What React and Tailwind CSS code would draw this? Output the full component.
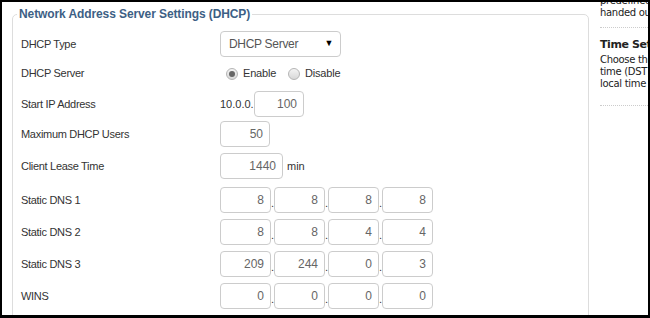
import React from "react";

const LABEL_FONT = { fontFamily: '"Liberation Sans", Arial, sans-serif' };

function Field({ value, w = "w-[51px]" }) {
  return (
    <div
      className={`${w} h-[26px] border border-[#ccc] rounded-[4px] bg-white flex items-center justify-end pr-[6px] text-[12px] text-[#666]`}
    >
      {value}
    </div>
  );
}

function Quad({ values }) {
  return (
    <div className="flex items-center">
      {values.map((v, i) => (
        <React.Fragment key={i}>
          <Field value={v} />
          {i < 3 && <span className="w-[3px] text-[11px] text-[#333] self-end pb-[4px] leading-none">.</span>}
        </React.Fragment>
      ))}
    </div>
  );
}

function Row({ label, h, children }) {
  return (
    <div className={`flex items-center ${h}`}>
      <div className="w-[203px] pl-[4px] text-[11px] tracking-[-0.3px] text-[#333]">{label}</div>
      <div className="flex items-center">{children}</div>
    </div>
  );
}

function Radio({ checked }) {
  return (
    <span className="w-[12px] h-[12px] rounded-full border border-[#b5b5b5] bg-gradient-to-b from-[#f4f4f4] to-[#d8d8d8] flex items-center justify-center">
      {checked && <span className="w-[6px] h-[6px] rounded-full bg-[#666]" />}
    </span>
  );
}

export default function App() {
  return (
    <div
      className="w-[650px] h-[318px] overflow-hidden bg-white border-black border-t-2 border-l-2 border-r-2 border-b-[3px] flex"
      style={LABEL_FONT}
    >
      {/* MAIN PANEL */}
      <div className="w-[596px] shrink-0 pl-[10px] pt-[4px]">
        <fieldset className="w-[577px] border border-[#ddd] rounded-[5px] px-[4px] pb-[20px]">
          <legend className="px-[2px] text-[12px] font-bold tracking-[-0.1px] text-[#3d5f85] leading-[16px]">
            Network Address Server Settings (DHCP)
          </legend>

          <div className="pt-[7px]">
            <Row label="DHCP Type" h="h-[30px]">
              <div className="w-[121px] h-[26px] border border-[#ccc] rounded-[4px] bg-white flex items-center justify-between pl-[8px] pr-[7px] text-[12px] tracking-[-0.3px] text-[#555]">
                <span>DHCP Server</span>
                <span className="text-[9px] text-black">▼</span>
              </div>
            </Row>
            <Row label="DHCP Server" h="h-[29px]">
              <div className="flex items-center pl-[6px] text-[11px] tracking-[-0.2px] text-[#333]">
                <Radio checked />
                <span className="ml-[5px]">Enable</span>
                <span className="ml-[12px]">
                  <Radio />
                </span>
                <span className="ml-[5px]">Disable</span>
              </div>
            </Row>
            <Row label="Start IP Address" h="h-[32px]">
              <span className="text-[11px] text-[#333] w-[34px]">10.0.0.</span>
              <Field value="100" w="w-[50px]" />
            </Row>
            <Row label="Maximum DHCP Users" h="h-[28px]">
              <Field value="50" w="w-[50px]" />
            </Row>
            <Row label="Client Lease Time" h="h-[36px]">
              <Field value="1440" w="w-[63px]" />
              <span className="ml-[4px] text-[11px] text-[#333]">min</span>
            </Row>
            <Row label="Static DNS 1" h="h-[32px]">
              <Quad values={["8", "8", "8", "8"]} />
            </Row>
            <Row label="Static DNS 2" h="h-[32px]">
              <Quad values={["8", "8", "4", "4"]} />
            </Row>
            <Row label="Static DNS 3" h="h-[32px]">
              <Quad values={["209", "244", "0", "3"]} />
            </Row>
            <Row label="WINS" h="h-[32px]">
              <Quad values={["0", "0", "0", "0"]} />
            </Row>
          </div>
        </fieldset>
      </div>

      {/* SIDEBAR */}
      <div
        className="flex-1 pl-[2px] text-[10px] tracking-[-0.3px] leading-[12px] text-[#222] whitespace-nowrap overflow-hidden"
        style={{ fontFamily: '"DejaVu Sans", Verdana, sans-serif' }}
      >
        <div className="-mt-[7px]">
          <div>predefined</div>
          <div>handed out</div>
        </div>
        <div className="mt-[8px] border-t border-dotted border-[#ccc]" />
        <div className="mt-[10px] font-bold text-[11px] tracking-[-0.4px] leading-[14px]">Time Settings</div>
        <div className="mt-[2px]">
          <div>Choose the</div>
          <div>time (DST)</div>
          <div>local time</div>
        </div>
        <div className="mt-[15px] border-t border-dotted border-[#ccc]" />
      </div>
    </div>
  );
}
